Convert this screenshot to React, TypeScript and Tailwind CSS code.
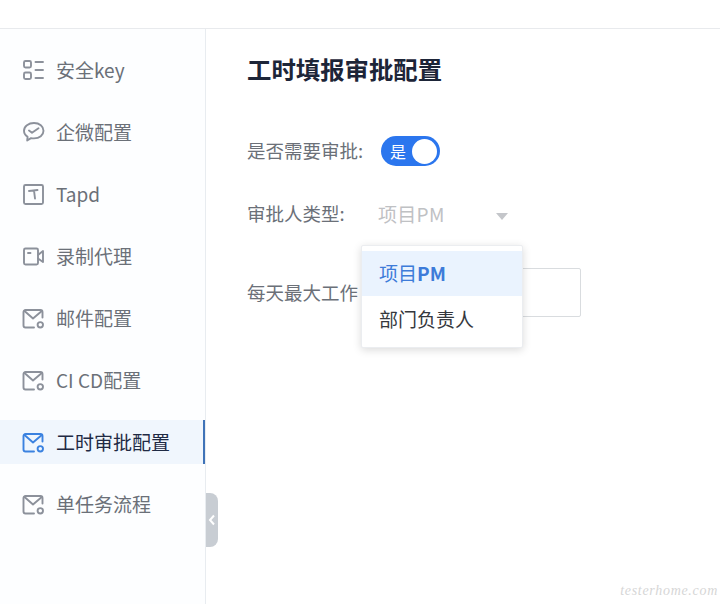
const MailIcon = () => (
  <>
    <path d="M20.5 10.5V5A2 2 0 0 0 18.5 3H3.5A2 2 0 0 0 1.5 5V18.5A2 2 0 0 0 3.5 20.5H12" />
    <path d="M2.5 4L11 11.5L19.8 4" />
    <circle cx="18.3" cy="17.8" r="2.7" />
  </>
);

const icons: Record<string, React.ReactNode> = {
  key: (
    <>
      <rect x="2" y="2" width="7" height="6.5" rx="1.5" />
      <rect x="2" y="13.5" width="7" height="6.5" rx="1.5" />
      <path d="M13.5 3H21M13.5 11H21M13.5 19H21" />
    </>
  ),
  wechat: (
    <>
      <path d="M12 2C6.5 2 2 5.3 2 9.7C2 12.1 3.4 14.3 5.6 15.7L5.2 19.5L9 17.1C10 17.3 11 17.4 12 17.4C17.5 17.4 21.5 14.1 21.5 9.7C21.5 5.3 17.5 2 12 2Z" />
      <path d="M7 9.5L10 11.7L16.5 7.3" />
    </>
  ),
  tapd: (
    <>
      <rect x="2" y="2" width="19" height="19" rx="1.5" />
      <path d="M7 8L15.5 7M12 7.5L13 15.5" />
    </>
  ),
  video: (
    <>
      <rect x="2" y="3.5" width="14" height="16" rx="1.5" />
      <path d="M16 10L21 6V17L16 13.5" />
      <path d="M6 8H8.5" />
    </>
  ),
  mail: <MailIcon />,
};

const menu = [
  { label: "安全key", icon: "key" },
  { label: "企微配置", icon: "wechat" },
  { label: "Tapd", icon: "tapd" },
  { label: "录制代理", icon: "video" },
  { label: "邮件配置", icon: "mail" },
  { label: "CI CD配置", icon: "mail" },
  { label: "工时审批配置", icon: "mail", active: true },
  { label: "单任务流程", icon: "mail" },
];

const App = () => {
  return (
    <div className="w-[720px] h-[604px] overflow-hidden bg-white flex flex-col font-['Noto_Sans_CJK_SC','Noto_Sans',sans-serif]">
      <div className="h-[29px] shrink-0 border-b border-[#e8eaed]" />
      <div className="flex flex-1 min-h-0">
        <aside className="relative w-[206px] shrink-0 border-r border-[#e8ecf0] bg-[#fdfeff] pt-[19px] flex flex-col gap-[18px]">
          {menu.map((item) => (
            <div
              key={item.label}
              className={
                item.active
                  ? "h-[44px] flex items-center gap-[11px] pl-[22px] bg-[#f0f6fd] border-r-2 border-[#3f73b8] text-[#1f2a44] text-[19px]"
                  : "h-[44px] flex items-center gap-[11px] pl-[22px] text-[#6b7078] text-[19px]"
              }
            >
              <svg
                viewBox="0 0 23 23"
                width="23"
                height="23"
                fill="none"
                stroke={item.active ? "#3b82e0" : "#8c919b"}
                strokeWidth="1.9"
                strokeLinecap="round"
                strokeLinejoin="round"
              >
                {icons[item.icon]}
              </svg>
              <span className="whitespace-nowrap">{item.label}</span>
            </div>
          ))}
          <div className="absolute left-[206px] top-[464px] w-[12px] h-[54px] rounded-r-lg bg-[#c8cdd3] flex items-center justify-center">
            <svg viewBox="0 0 8 12" width="8" height="12" fill="none" stroke="#fff" strokeWidth="2">
              <path d="M6 1.5L2 6L6 10.5" />
            </svg>
          </div>
        </aside>

        <main className="relative flex-1 pl-[41px] pt-[20px]">
          <h1 className="text-[24.4px] leading-[40px] font-bold text-[#1d2538]">工时填报审批配置</h1>

          <div className="mt-[47px] flex items-center h-[30px] text-[18.5px] text-[#6b7078]">
            <span className="w-[134px] whitespace-nowrap">是否需要审批:</span>
            <div className="w-[59px] h-[30px] rounded-full bg-[#2b76ee] flex items-center justify-between pl-[9px] pr-[3px]">
              <span className="text-[16px] text-white">是</span>
              <span className="w-[25px] h-[25px] rounded-full bg-white" />
            </div>
          </div>

          <div className="mt-[33px] flex items-center h-[30px] text-[18.5px] text-[#6b7078]">
            <span className="w-[131px] whitespace-nowrap">审批人类型:</span>
            <span className="w-[118px] text-[19px] tracking-[0.3px] text-[#bfc1c4]">项目PM</span>
            <span className="mt-[5px] border-x-[6px] border-t-[7px] border-x-transparent border-t-[#c4c6ca]" />
          </div>

          <div className="mt-[39px] flex items-center h-[49px] text-[18.5px] text-[#6b7078]">
            <span className="w-[131px] whitespace-nowrap">每天最大工作</span>
            <div className="w-[203px] h-[49px] border border-[#d9dcdf] rounded-[2px]" />
          </div>

          <div className="absolute left-[155px] top-[216px] w-[162px] h-[103px] py-[5px] rounded-[2px] bg-white border border-[#ebedf0] shadow-[0_2px_8px_rgba(0,0,0,0.15)] text-[19px]">
            <div className="h-[45px] flex items-center pl-[17px] bg-[#eaf3fe] text-[#3d7bd9]">
              项目<span className="font-bold">PM</span>
            </div>
            <div className="h-[47px] flex items-center pl-[17px] text-[#35383d]">部门负责人</div>
          </div>

          <div className="absolute right-[2px] bottom-[3px] font-['Liberation_Serif',serif] italic text-[14px] tracking-[0.7px] text-[#d6d6d6]">
            testerhome.com
          </div>
        </main>
      </div>
    </div>
  );
};

export default App;
